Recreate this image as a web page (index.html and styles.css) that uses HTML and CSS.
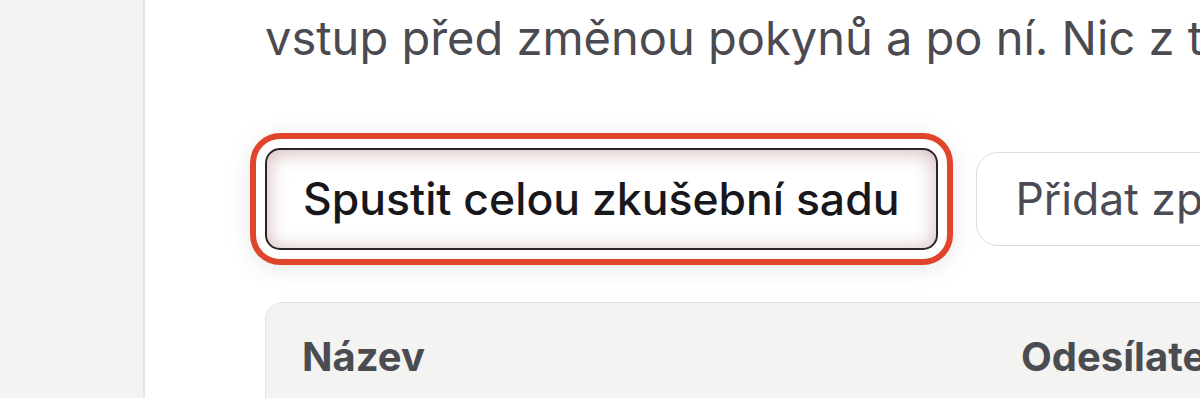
FILE: index.html
```html
<!DOCTYPE html>
<html lang="cs">
<head>
    <meta charset="UTF-8">
    <meta name="viewport" content="width=device-width, initial-scale=1.0">
    <title>Zkušební sada</title>
    <link rel="stylesheet" href="styles.css">
</head>
<body>
    <div class="layout">
        <aside class="sidebar"></aside>

        <main class="main">
            <p class="intro">vstup před změnou pokynů a po ní. Nic z toho se neukládá.</p>

            <div class="actions">
                <button class="btn btn-primary highlighted">Spustit celou zkušební sadu</button>
                <button class="btn btn-secondary">Přidat zprávu do sady</button>
            </div>

            <div class="cases-table">
                <div class="table-head">
                    <div class="col-name">Název</div>
                    <div class="col-sender">Odesílatel</div>
                </div>
            </div>
        </main>
    </div>
</body>
</html>
```

FILE: styles.css
```css
* {
    margin: 0;
    padding: 0;
    box-sizing: border-box;
}

body {
    font-family: 'Inter', 'Noto Sans', sans-serif;
    background: #fff;
    color: #222;
    overflow: hidden;
}

.layout {
    display: flex;
    height: 398px;
}

.sidebar {
    width: 145px;
    flex-shrink: 0;
    background: #f3f3f1;
    border-right: 2px solid #e4e4e1;
}

.main {
    flex: 1;
    min-width: 0;
    padding: 6px 0 0 120px;
    white-space: nowrap;
    overflow: hidden;
}

.intro {
    font-size: 47px;
    line-height: 63px;
    color: #4a4a50;
}

.actions {
    display: flex;
    align-items: center;
    gap: 38px;
    margin-top: 79px;
}

.btn {
    font-family: inherit;
    font-size: 44.5px;
    line-height: 56px;
    background: #fff;
    cursor: pointer;
    white-space: nowrap;
    flex-shrink: 0;
}

.btn-primary {
    padding: 21px 37px 21px 36px;
    border: 2px solid #2e2427;
    border-bottom-width: 2.5px;
    border-radius: 15px;
    font-weight: 500;
    color: #17171c;
}

/* annotation ring round the button */
.highlighted {
    box-shadow:
        inset 0 2px 20px rgba(150, 80, 80, 0.42),
        0 0 0 9px #fff,
        0 0 0 15px #e0442a,
        0 4px 26px 14px rgba(0, 0, 0, 0.10);
}

.btn-secondary {
    padding: 18px 38px;
    border: 1.5px solid #dcdcda;
    border-radius: 22px;
    font-weight: 400;
    color: #4b4b55;
}

.cases-table {
    margin-top: 52px;
    background: #f3f3f1;
    border: 1px solid #e3e3e0;
    border-radius: 18px;
    height: 200px;
    width: 1100px;
}

.table-head {
    display: grid;
    grid-template-columns: 719px 1fr;
    padding: 26px 36px;
    font-size: 40px;
    font-weight: 700;
    line-height: 56px;
    color: #4b4b52;
}
```
